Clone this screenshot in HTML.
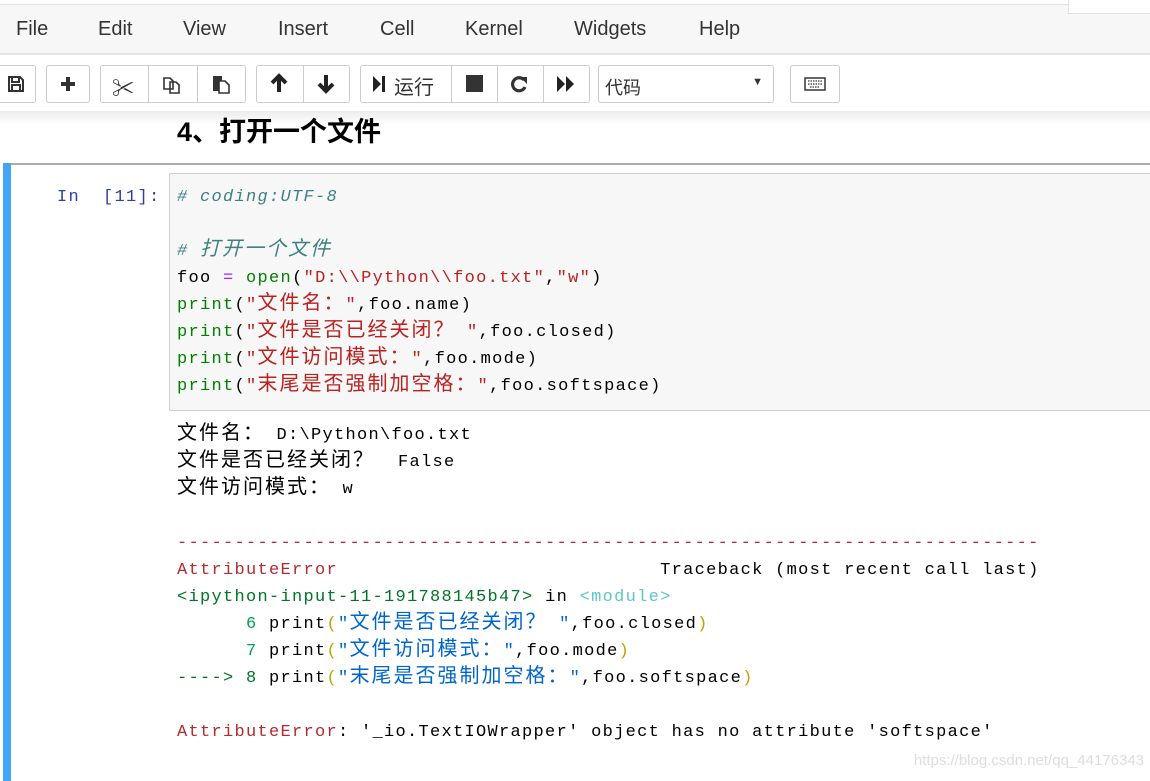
<!DOCTYPE html>
<html><head><meta charset="utf-8"><style>
*{margin:0;padding:0;box-sizing:border-box}
body{width:1150px;height:781px;overflow:hidden;background:#fff;font-family:"Liberation Sans","Noto Sans CJK SC",sans-serif;position:relative}
.abs{position:absolute}
#topline{left:0;top:4px;width:1068px;height:1px;background:#e0e0e0}
#tr{left:1068px;top:0;width:82px;height:14px;border-left:1px solid #e0e0e0;border-bottom:1px solid #e0e0e0;background:#fff;z-index:3}
#menu{left:0;top:5px;width:1150px;height:50px;background:#f7f7f7;border-bottom:2px solid #e5e5e5}
.mi{position:absolute;top:13px;font-size:20px;color:#333}
.btn{position:absolute;top:65px;height:38px;border:1px solid #ccc;border-radius:3px;background:#fff;display:flex;align-items:center;justify-content:center;color:#333}
.sep{position:absolute;top:65px;width:1px;height:38px;background:#ccc}
#shadow{left:0;top:111px;width:1150px;height:14px;background:linear-gradient(#ececec,#fff)}
h1{position:absolute;left:177px;top:110px;font-size:27px;font-weight:bold;color:#000;font-family:"Liberation Sans","Noto Sans CJK SC",sans-serif}
#cellbar{left:3px;top:163px;width:8px;height:618px;background:#42a5f5}
#celltop{left:11px;top:163px;width:1139px;height:2px;background:#ababab}
#in{left:169px;top:173px;width:990px;height:238px;border:1px solid #cfcfcf;background:#f7f7f7;border-radius:2px}
.mono{font-family:"Liberation Mono","Noto Sans CJK SC",monospace;font-size:17px;letter-spacing:1.3px;line-height:27px;white-space:pre}
.z{font-size:20px;letter-spacing:2px;line-height:20px}
#prompt{left:57px;top:184px;color:#303f9f}
#code{left:177px;top:184px;color:#000}
#out{left:177px;top:422px;color:#000}
.c{color:#408080;font-style:italic}.k{color:#008000}.s{color:#ba2121}.o{color:#aa22ff}
.r{color:#b22b31}.g{color:#007427}.cy{color:#60c6c8}.bl{color:#0065ca}.ye{color:#c4a000}.gg{color:#00a250}
#wm{right:6px;top:752px;font-size:15px;color:#ddd}
</style></head><body>
<div class="abs" id="topline"></div><div class="abs" id="tr"></div>
<div class="abs" id="menu">
<span class="mi" style="left:16px">File</span><span class="mi" style="left:98px">Edit</span><span class="mi" style="left:183px">View</span><span class="mi" style="left:278px">Insert</span><span class="mi" style="left:380px">Cell</span><span class="mi" style="left:465px">Kernel</span><span class="mi" style="left:574px">Widgets</span><span class="mi" style="left:699px">Help</span>
</div>
<div class="btn" style="left:-4px;width:40px"><svg width="18" height="18" viewBox="0 0 18 18"><path d="M2 2h11l3 3v11H2z M5 2v5h7V2 M5 16v-6h8v6" fill="none" stroke="#333" stroke-width="2"/></svg></div>
<div class="btn" style="left:46px;width:44px"><svg width="16" height="16"><path d="M8 1v14M1 8h14" stroke="#333" stroke-width="4"/></svg></div>
<div class="btn" style="left:100px;width:146px"></div>
<div class="sep" style="left:148px"></div><div class="sep" style="left:197px"></div>
<div class="abs" style="left:112px;top:71px;font-size:22px;color:#333">✂</div>
<svg class="abs" style="left:162px;top:74px" width="20" height="20"><path d="M2 4h6l3 3v8H2z M8 8h6l3 3v8H8z" fill="#fff" stroke="#333" stroke-width="1.6"/></svg>
<svg class="abs" style="left:211px;top:74px" width="20" height="20"><path d="M2 2h9v15H2z" fill="#333"/><path d="M8 7h6l4 4v8H8z" fill="#fff" stroke="#333" stroke-width="1.6"/></svg>
<div class="btn" style="left:256px;width:94px"></div><div class="sep" style="left:303px"></div>
<svg class="abs" style="left:269px;top:73px" width="20" height="22"><path d="M10 19V4M3 10l7-7 7 7" fill="none" stroke="#222" stroke-width="4"/></svg>
<svg class="abs" style="left:316px;top:73px" width="20" height="22"><path d="M10 2v15M3 11l7 7 7-7" fill="none" stroke="#222" stroke-width="4"/></svg>
<div class="btn" style="left:360px;width:230px"></div>
<div class="sep" style="left:451px"></div><div class="sep" style="left:497px"></div><div class="sep" style="left:543px"></div>
<svg class="abs" style="left:372px;top:75px" width="14" height="18"><path d="M1 1l8 8-8 8z" fill="#222"/><rect x="10" y="1" width="3" height="16" fill="#222"/></svg>
<div class="abs" style="left:394px;top:71px;font-size:20px;color:#333;font-family:'Noto Sans CJK SC',sans-serif">运行</div>
<div class="abs" style="left:466px;top:75px;width:17px;height:17px;background:#333"></div>
<svg class="abs" style="left:510px;top:74px" width="20" height="20"><path d="M14 6A6.5 6.5 0 1 0 15 13" fill="none" stroke="#333" stroke-width="3.2"/><path d="M10 3h7v7z" fill="#333"/></svg>
<svg class="abs" style="left:556px;top:75px" width="20" height="18"><path d="M1 1l8 8-8 8zM10 1l8 8-8 8z" fill="#222"/></svg>
<div class="btn" style="left:598px;width:176px;justify-content:flex-start;padding-left:6px"><span style="font-size:18px;color:#333;font-family:'Noto Sans CJK SC',sans-serif;margin-top:6px">代码</span><span style="position:absolute;right:10px;top:10px;font-size:11px">▼</span></div>
<div class="btn" style="left:790px;width:50px"><svg width="22" height="14"><rect x="1" y="1" width="20" height="12" fill="none" stroke="#333" stroke-width="1.5"/><path d="M4 4h14M4 7h14M6 10h10" stroke="#333" stroke-width="1.3" stroke-dasharray="1.5 1"/></svg></div>
<div class="abs" id="shadow"></div>
<h1>4、打开一个文件</h1>
<div class="abs" id="cellbar"></div><div class="abs" id="celltop"></div>
<div class="abs" id="in"></div>
<div class="abs mono" id="prompt">In  [11]:</div>
<div class="abs mono" id="code"><span class="c"># coding:UTF-8</span>

<span class="c"># <span class="z">打开一个文件</span></span>
foo <span class="o">=</span> <span class="k">open</span>(<span class="s">"D:\\Python\\foo.txt"</span>,<span class="s">"w"</span>)
<span class="k">print</span>(<span class="s">"<span class="z">文件名：</span>"</span>,foo.name)
<span class="k">print</span>(<span class="s">"<span class="z">文件是否已经关闭？</span> "</span>,foo.closed)
<span class="k">print</span>(<span class="s">"<span class="z">文件访问模式：</span>"</span>,foo.mode)
<span class="k">print</span>(<span class="s">"<span class="z">末尾是否强制加空格：</span>"</span>,foo.softspace)</div>
<div class="abs mono" id="out"><span class="z">文件名：</span> D:\Python\foo.txt
<span class="z">文件是否已经关闭？</span>  False
<span class="z">文件访问模式：</span> w

<span class="r">---------------------------------------------------------------------------</span>
<span class="r">AttributeError</span>                            Traceback (most recent call last)
<span class="g">&lt;ipython-input-11-191788145b47&gt;</span> in <span class="cy">&lt;module&gt;</span>
<span class="gg">      6</span> print<span class="ye">(</span><span class="bl">"<span class="z">文件是否已经关闭？</span> "</span>,foo.closed<span class="ye">)</span>
<span class="gg">      7</span> print<span class="ye">(</span><span class="bl">"<span class="z">文件访问模式：</span>"</span>,foo.mode<span class="ye">)</span>
<span class="g">----&gt; 8</span> print<span class="ye">(</span><span class="bl">"<span class="z">末尾是否强制加空格：</span>"</span>,foo.softspace<span class="ye">)</span>

<span class="r">AttributeError</span>: '_io.TextIOWrapper' object has no attribute 'softspace'</div>
<div class="abs" id="wm">https://blog.csdn.net/qq_44176343</div>
</body></html>
